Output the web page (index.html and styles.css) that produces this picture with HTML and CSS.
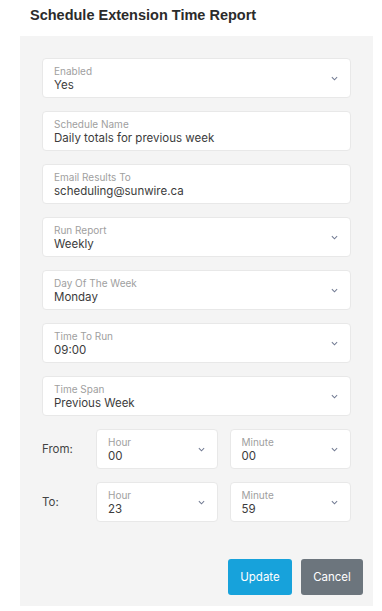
FILE: index.html
```html
<!DOCTYPE html>
<html>
<head>
  <meta charset="UTF-8">
  <title>Schedule Extension Time Report</title>
  <link rel="stylesheet" href="styles.css">
</head>
<body>

<h1 class="title">Schedule Extension Time Report</h1>

<div class="panel">
  <div class="fields">
    <div class="field select">
      <div class="text"><span class="label">Enabled</span><span class="value">Yes</span></div>
      <svg class="chev" viewBox="0 0 8 5"><polyline points="1,1 4,4 7,1"/></svg>
    </div>
    <div class="field">
      <div class="text"><span class="label">Schedule Name</span><span class="value">Daily totals for previous week</span></div>
    </div>
    <div class="field">
      <div class="text"><span class="label">Email Results To</span><span class="value">scheduling@sunwire.ca</span></div>
    </div>
    <div class="field select">
      <div class="text"><span class="label">Run Report</span><span class="value">Weekly</span></div>
      <svg class="chev" viewBox="0 0 8 5"><polyline points="1,1 4,4 7,1"/></svg>
    </div>
    <div class="field select">
      <div class="text"><span class="label">Day Of The Week</span><span class="value">Monday</span></div>
      <svg class="chev" viewBox="0 0 8 5"><polyline points="1,1 4,4 7,1"/></svg>
    </div>
    <div class="field select">
      <div class="text"><span class="label">Time To Run</span><span class="value">09:00</span></div>
      <svg class="chev" viewBox="0 0 8 5"><polyline points="1,1 4,4 7,1"/></svg>
    </div>
    <div class="field select">
      <div class="text"><span class="label">Time Span</span><span class="value">Previous Week</span></div>
      <svg class="chev" viewBox="0 0 8 5"><polyline points="1,1 4,4 7,1"/></svg>
    </div>

    <div class="time-row">
      <span class="row-label">From:</span>
      <div class="field select">
        <div class="text"><span class="label">Hour</span><span class="value">00</span></div>
        <svg class="chev" viewBox="0 0 8 5"><polyline points="1,1 4,4 7,1"/></svg>
      </div>
      <div class="field select">
        <div class="text"><span class="label">Minute</span><span class="value">00</span></div>
        <svg class="chev" viewBox="0 0 8 5"><polyline points="1,1 4,4 7,1"/></svg>
      </div>
    </div>
    <div class="time-row">
      <span class="row-label">To:</span>
      <div class="field select">
        <div class="text"><span class="label">Hour</span><span class="value">23</span></div>
        <svg class="chev" viewBox="0 0 8 5"><polyline points="1,1 4,4 7,1"/></svg>
      </div>
      <div class="field select">
        <div class="text"><span class="label">Minute</span><span class="value">59</span></div>
        <svg class="chev" viewBox="0 0 8 5"><polyline points="1,1 4,4 7,1"/></svg>
      </div>
    </div>
  </div>

  <div class="actions">
    <button class="btn btn-update">Update</button>
    <button class="btn btn-cancel">Cancel</button>
  </div>
</div>

</body>
</html>
```

FILE: styles.css
```css
body {
  margin: 0;
  background: #fff;
  font-family: Inter, "Liberation Sans", sans-serif;
  color: #333;
}

.title {
  font-family: "Liberation Sans", Arial, sans-serif;
  font-size: 14.5px;
  font-weight: bold;
  color: #2b2b2b;
  margin: 0;
  padding: 7px 0 0 30px;
  height: 36px;
  box-sizing: border-box;
  line-height: 17px;
}

.panel {
  background: #f4f4f4;
  margin: 0 9px 0 20px;
  padding: 22px 22px 11px 22px;
}

.fields {
  display: flex;
  flex-direction: column;
  gap: 13px;
}

.field {
  background: #fff;
  border: 1px solid #e8e8e8;
  border-radius: 4px;
  height: 40px;
  box-sizing: border-box;
  padding: 0 11px;
  display: flex;
  align-items: center;
  justify-content: space-between;
}

.text {
  display: flex;
  flex-direction: column;
  gap: 1px;
}

.label {
  font-size: 10px;
  color: #a0a0a0;
  line-height: 12px;
}

.value {
  font-size: 11.5px;
  color: #3c3c3c;
  line-height: 14px;
}

.chev {
  width: 7px;
  height: 5px;
  margin-right: 1px;
  fill: none;
  stroke: #737c94;
  stroke-width: 1.2;
}

.time-row {
  display: grid;
  grid-template-columns: 42px 1fr 1fr;
  column-gap: 12px;
  align-items: center;
}

.row-label {
  font-size: 11.5px;
  color: #444;
}

.actions {
  display: flex;
  justify-content: flex-end;
  gap: 9px;
  margin: 37px -12px 0 0;
}

.btn {
  font-family: Inter, "Liberation Sans", sans-serif;
  font-size: 11.5px;
  height: 36px;
  border: none;
  border-radius: 3px;
  color: #fff;
  padding: 0;
}

.btn-update {
  background: #17a2db;
  width: 64px;
}

.btn-cancel {
  background: #6c757d;
  width: 62px;
}
```
